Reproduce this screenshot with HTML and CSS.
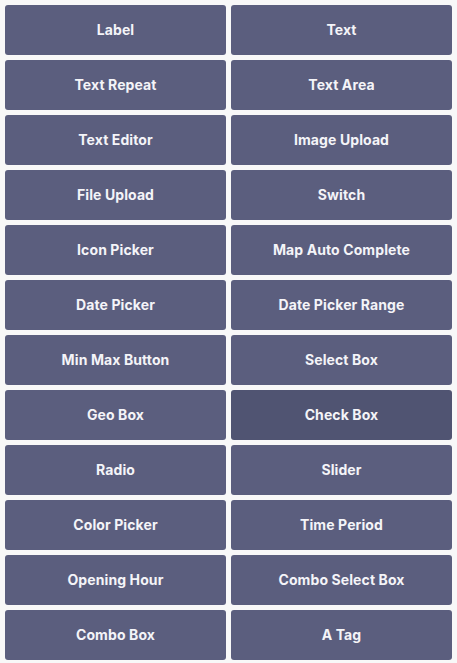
FILE: index.html
```html
<!DOCTYPE html>
<html>
<head>
<meta charset="utf-8">
<link rel="stylesheet" href="styles.css">
</head>
<body>
<div class="grid">
  <div class="btn">Label</div>
  <div class="btn">Text</div>
  <div class="btn">Text Repeat</div>
  <div class="btn">Text Area</div>
  <div class="btn">Text Editor</div>
  <div class="btn">Image Upload</div>
  <div class="btn">File Upload</div>
  <div class="btn">Switch</div>
  <div class="btn">Icon Picker</div>
  <div class="btn">Map Auto Complete</div>
  <div class="btn">Date Picker</div>
  <div class="btn">Date Picker Range</div>
  <div class="btn">Min Max Button</div>
  <div class="btn">Select Box</div>
  <div class="btn">Geo Box</div>
  <div class="btn btn-active">Check Box</div>
  <div class="btn">Radio</div>
  <div class="btn">Slider</div>
  <div class="btn">Color Picker</div>
  <div class="btn">Time Period</div>
  <div class="btn">Opening Hour</div>
  <div class="btn">Combo Select Box</div>
  <div class="btn">Combo Box</div>
  <div class="btn">A Tag</div>
</div>
</body>
</html>
```
FILE: styles.css
```css
html, body {
  margin: 0;
  padding: 0;
  background: #f8f8f8;
}
.grid {
  display: grid;
  grid-template-columns: 221px 221px;
  grid-auto-rows: 50px;
  gap: 5px;
  padding: 5px;
}
.btn {
  display: flex;
  align-items: center;
  justify-content: center;
  padding-bottom: 1px;
  box-sizing: border-box;
  background: #5b5e7e;
  color: #f4f4f8;
  border-radius: 3px;
  font-family: Inter, "Liberation Sans", sans-serif;
  font-weight: 700;
  font-size: 14px;
  letter-spacing: 0.1px;
}
.btn-active {
  background: #505472;
}
```
